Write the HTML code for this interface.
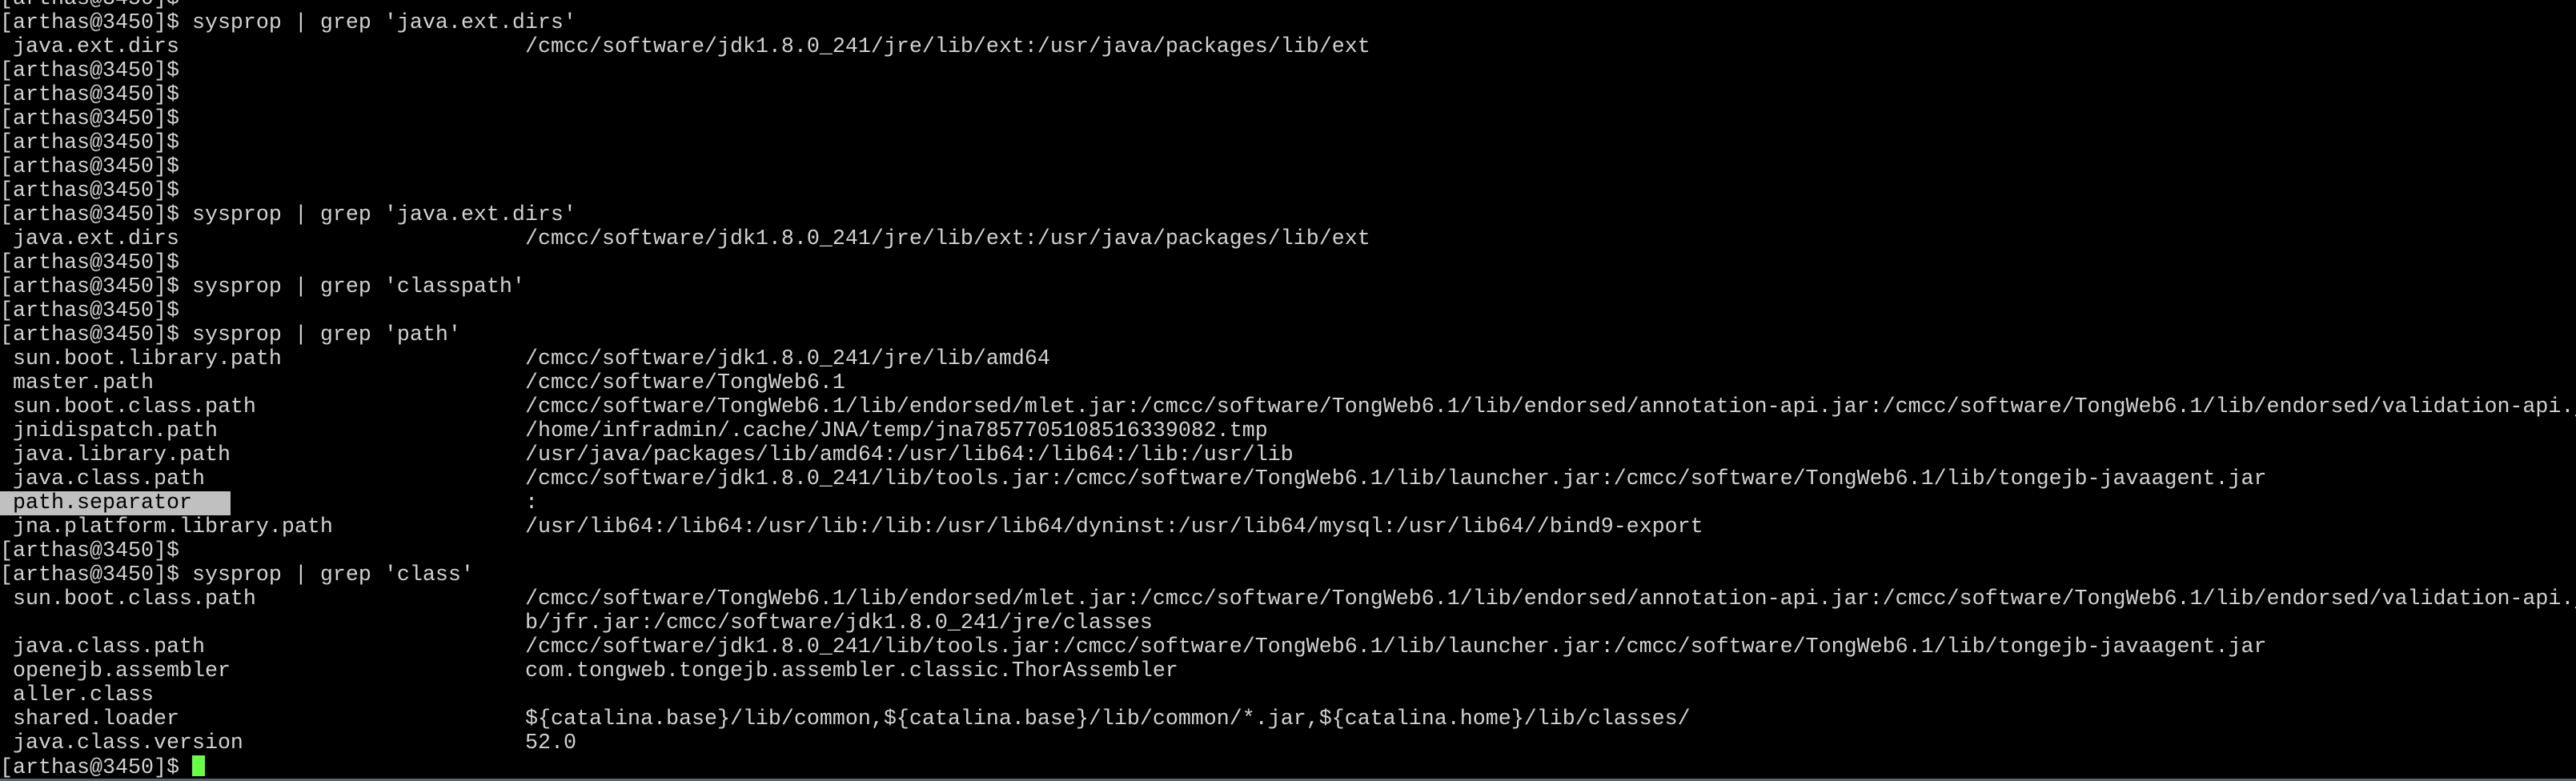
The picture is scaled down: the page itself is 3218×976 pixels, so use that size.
<!DOCTYPE html>
<html><head><meta charset="utf-8"><style>
html,body{margin:0;padding:0;background:#000;}
body{width:3218px;height:976px;overflow:hidden;position:relative;}
#t{position:absolute;left:0;top:-16px;width:3218px;font-family:"Liberation Mono","DejaVu Sans Mono",monospace;font-size:26.67px;line-height:30px;color:#d2d2d2;}
#t div{height:30px;overflow:hidden;white-space:pre;}
.k{display:inline-block;width:656px;}
.hl{background:#c0c0c0;color:#000;display:inline-block;width:288px;}
.cur{display:inline-block;width:16px;height:26px;background:#66ff44;vertical-align:-4px;}
#bar{position:absolute;left:0;bottom:0;width:3218px;height:3px;background:#5b6670;}
</style></head><body>
<div id="t">
<div>[arthas@3450]$</div>
<div>[arthas@3450]$ sysprop | grep 'java.ext.dirs'</div>
<div><span class="k"> java.ext.dirs</span>/cmcc/software/jdk1.8.0_241/jre/lib/ext:/usr/java/packages/lib/ext</div>
<div>[arthas@3450]$</div>
<div>[arthas@3450]$</div>
<div>[arthas@3450]$</div>
<div>[arthas@3450]$</div>
<div>[arthas@3450]$</div>
<div>[arthas@3450]$</div>
<div>[arthas@3450]$ sysprop | grep 'java.ext.dirs'</div>
<div><span class="k"> java.ext.dirs</span>/cmcc/software/jdk1.8.0_241/jre/lib/ext:/usr/java/packages/lib/ext</div>
<div>[arthas@3450]$</div>
<div>[arthas@3450]$ sysprop | grep 'classpath'</div>
<div>[arthas@3450]$</div>
<div>[arthas@3450]$ sysprop | grep 'path'</div>
<div><span class="k"> sun.boot.library.path</span>/cmcc/software/jdk1.8.0_241/jre/lib/amd64</div>
<div><span class="k"> master.path</span>/cmcc/software/TongWeb6.1</div>
<div><span class="k"> sun.boot.class.path</span>/cmcc/software/TongWeb6.1/lib/endorsed/mlet.jar:/cmcc/software/TongWeb6.1/lib/endorsed/annotation-api.jar:/cmcc/software/TongWeb6.1/lib/endorsed/validation-api.jar</div>
<div><span class="k"> jnidispatch.path</span>/home/infradmin/.cache/JNA/temp/jna7857705108516339082.tmp</div>
<div><span class="k"> java.library.path</span>/usr/java/packages/lib/amd64:/usr/lib64:/lib64:/lib:/usr/lib</div>
<div><span class="k"> java.class.path</span>/cmcc/software/jdk1.8.0_241/lib/tools.jar:/cmcc/software/TongWeb6.1/lib/launcher.jar:/cmcc/software/TongWeb6.1/lib/tongejb-javaagent.jar</div>
<div><span class="k"><span class="hl"> path.separator</span></span>:</div>
<div><span class="k"> jna.platform.library.path</span>/usr/lib64:/lib64:/usr/lib:/lib:/usr/lib64/dyninst:/usr/lib64/mysql:/usr/lib64//bind9-export</div>
<div>[arthas@3450]$</div>
<div>[arthas@3450]$ sysprop | grep 'class'</div>
<div><span class="k"> sun.boot.class.path</span>/cmcc/software/TongWeb6.1/lib/endorsed/mlet.jar:/cmcc/software/TongWeb6.1/lib/endorsed/annotation-api.jar:/cmcc/software/TongWeb6.1/lib/endorsed/validation-api.jar</div>
<div><span class="k"></span>b/jfr.jar:/cmcc/software/jdk1.8.0_241/jre/classes</div>
<div><span class="k"> java.class.path</span>/cmcc/software/jdk1.8.0_241/lib/tools.jar:/cmcc/software/TongWeb6.1/lib/launcher.jar:/cmcc/software/TongWeb6.1/lib/tongejb-javaagent.jar</div>
<div><span class="k"> openejb.assembler</span>com.tongweb.tongejb.assembler.classic.ThorAssembler</div>
<div><span class="k"> aller.class</span></div>
<div><span class="k"> shared.loader</span>${catalina.base}/lib/common,${catalina.base}/lib/common/*.jar,${catalina.home}/lib/classes/</div>
<div><span class="k"> java.class.version</span>52.0</div>
<div>[arthas@3450]$ <span class="cur"></span></div>
</div>
<div id="bar"></div>
</body></html>
